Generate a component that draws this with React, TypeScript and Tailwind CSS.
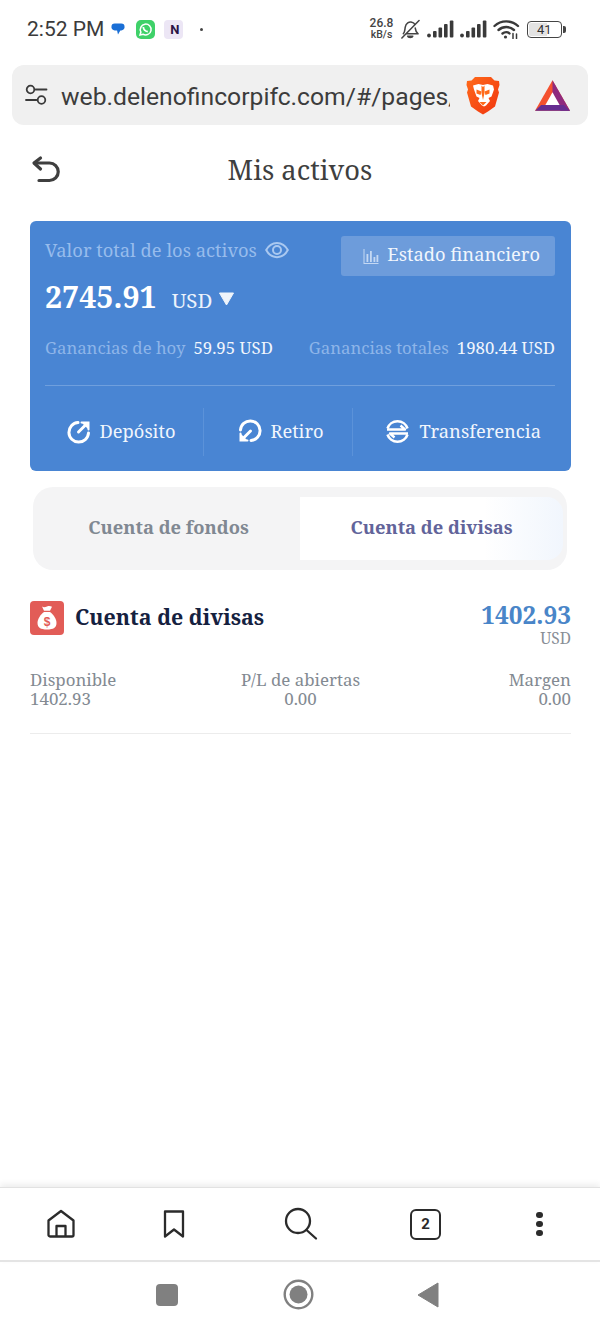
import React from "react";

const serif = "font-['Noto_Serif','DejaVu_Serif',serif]";

function Signal() {
  return (
    <svg width="27" height="18" viewBox="0 0 27 18" fill="#3a3a3a">
      <circle cx="2" cy="15.500" r="1.900" />
      <rect x="6" y="11" width="3.600" height="6.500" rx="1" />
      <rect x="11.500" y="7.500" width="3.600" height="10" rx="1" />
      <rect x="17" y="4" width="3.600" height="13.500" rx="1" />
      <rect x="22.800" y="0.500" width="3.600" height="17" rx="1" />
    </svg>
  );
}

function StatusBar() {
  return (
    <div className="h-[58px] flex items-center pl-[27px] pr-[34px] font-['Roboto',sans-serif] text-[#3b3b3b] shrink-0">
      <span className="text-[21px] leading-none">2:52 PM</span>
      <svg className="ml-[7px]" width="14" height="14" viewBox="0 0 15 14">
        <path d="M4 1h7a3.500 3.500 0 0 1 3.500 3.500v0A3.500 3.500 0 0 1 11 8.500H10L7.500 13 6.500 8.500H4A3.500 3.500 0 0 1 .5 4.500v0A3.500 3.500 0 0 1 4 1z" fill="#1a6fd6" />
      </svg>
      <span className="ml-[11px] w-[19px] h-[19px] rounded-[5px] bg-[#3fd169] flex items-center justify-center">
        <svg width="15" height="15" viewBox="0 0 15 15" fill="none" stroke="#fff" strokeWidth="1.500">
          <path d="M2 13l.9-3A5.400 5.400 0 1 1 5 12.200z" />
          <path d="M5.300 5c.2 2 2 4.200 4.500 4.700" strokeWidth="1.800" />
        </svg>
      </span>
      <span className="ml-[9px] w-[19px] h-[19px] rounded-[4px] bg-[#ece6f5] flex items-center justify-center text-[13px] font-bold text-[#2a1245] leading-none pl-[2px]">N</span>
      <span className="ml-[17px] w-[3px] h-[3px] rounded-full bg-[#444]" />
      <div className="ml-auto flex items-center">
        <div className="w-[23px] flex flex-col items-center text-[10.500px] leading-[11px] font-medium text-[#444]">
          <span className="text-[12px]">26.8</span>
          <span>kB/s</span>
        </div>
        <svg className="ml-[7px]" width="20" height="21" viewBox="0 0 21 21" fill="none" stroke="#444" strokeWidth="1.600" strokeLinecap="round" strokeLinejoin="round">
          <path d="M3.500 15c1.800-2 1.500-4.500 2-7C6.200 4 9.500 2 12.500 2.800c1.400.3 2.500 1.200 3 2.300" />
          <path d="M16 9c.2 2 .6 4 3 6H7" />
          <path d="M8 17.500h5.500c-.5 2-5 2-5.500 0z" />
          <path d="M2 19.500 20 1" />
        </svg>
        <div className="ml-[7px]"><Signal /></div>
        <div className="ml-[6px]"><Signal /></div>
        <svg className="ml-[6px]" width="27" height="20" viewBox="0 0 27 20" fill="none" stroke="#3a3a3a" strokeWidth="2.400" strokeLinecap="round">
          <path d="M1.500 7C8 .8 18.500.8 25 7" />
          <path d="M5.500 11c4.500-4 11-4 15.500 0" />
          <path d="M9.500 14.500c2.200-1.800 5.300-1.800 7 0" />
          <circle cx="12.500" cy="18" r="1.600" fill="#3a3a3a" stroke="none" />
          <path d="M20 14.500v5M23.500 15v4.500" strokeWidth="1.500" />
        </svg>
        <div className="ml-[7px] flex items-center">
          <div className="w-[35px] h-[17px] rounded-[4px] border border-[#444] p-[1px] flex">
            <div className="w-[18px] bg-[#e3e3e3] rounded-l-[2px] relative">
              <span className="absolute left-[8px] top-0 text-[13px] leading-[13px] text-[#333]">41</span>
            </div>
          </div>
          <div className="w-[3px] h-[7px] ml-[1px] bg-[#444] rounded-r-[2px]" />
        </div>
      </div>
    </div>
  );
}

function UrlBar() {
  return (
    <div className="mx-[12px] mt-[7px] h-[60px] rounded-[12px] bg-[#f0f0f0] flex items-center pl-[13px] font-['Roboto',sans-serif] shrink-0">
      <svg width="23" height="22" viewBox="0 0 23 22" fill="none" stroke="#3a3a3a" strokeWidth="1.800" strokeLinecap="round">
        <circle cx="5.500" cy="5.500" r="3.800" />
        <path d="M10.500 5.500h11M1 16h10.500" />
        <circle cx="16.500" cy="16" r="3.800" />
      </svg>
      <div className="ml-[13px] w-[389px] overflow-hidden whitespace-nowrap text-[24.700px] leading-[32px] pt-[3px] text-[#3c3c3c]">
        web.delenofincorpifc.com/#/pages/assets
      </div>
      <svg className="ml-[16px]" width="34" height="39" viewBox="0 0 34 39">
        <defs>
          <linearGradient id="brave" x1="0" y1="0" x2="1" y2="1">
            <stop offset="0" stopColor="#ff6a1a" />
            <stop offset="1" stopColor="#f0350f" />
          </linearGradient>
        </defs>
        <path d="M9 1h16l3.500 3.500L33 5l.5 4-1.500 4.500 1 3-4 14-7 5-5 3-5-3-7-5-4-14 1-3L.5 9 1 5l4.500-.5z" fill="url(#brave)" />
        <path d="M7 9.500l5.500-1.500 4.500 1 4.500-1L27 9.500l1 4-2.500 7-3 1.500 1.500 3-4 4.500-2 1-2-1-4-4.500 1.500-3-3-1.500-2.500-7z" fill="#fff" />
        <path d="M10.500 13.500l5 2-1 3.500-4-1.500zM23.500 13.500l-5 2 1 3.500 4-1.500z" fill="#ff6a1a" />
        <path d="M15.500 9.500 17 11l1.500-1.500V17l-1.500 7-1.500-7zM13.500 26h7l-3.500 3.500z" fill="#ff6a1a" />
      </svg>
      <svg className="ml-[35px]" width="35" height="31" viewBox="0 0 37 32">
        <path d="M18.500 0 37 32H0z" fill="#f4512f" />
        <path d="M18.500 0 37 32H27L18.500 16z" fill="#8e2a7e" />
        <path d="M0 32l6.500-6h24l6.500 6z" fill="#662d91" />
        <path d="M18.500 12.500 26 26H11z" fill="#fff" />
      </svg>
    </div>
  );
}

function BackIcon() {
  return (
    <svg width="30" height="30" viewBox="0 0 30 30" fill="none" stroke="#3f3f3f" strokeWidth="3.200" strokeLinecap="round" strokeLinejoin="round">
      <path d="M9.500 4 3 9l6.500 6" />
      <path d="M3.500 9h15a8.750 8.750 0 0 1 0 17.500H8" />
    </svg>
  );
}

function Card() {
  return (
    <div className={`ml-[30px] w-[541px] mt-[18px] h-[250px] rounded-[6px] bg-[#4985d3] pl-[15px] pr-[16px] ${serif}`}>
      <div className="flex justify-between items-start pt-[15px]">
        <div className="flex items-center pt-[1px]">
          <span className="text-[18.350px] leading-[26px] text-[#97bcec]">Valor total de los activos</span>
          <svg className="ml-[8px]" width="24" height="18" viewBox="0 0 24 18" fill="none" stroke="#a9c8f0" strokeWidth="2">
            <path d="M1.200 9c5-9.500 16.600-9.500 21.600 0-5 9.500-16.600 9.500-21.600 0z" />
            <circle cx="12" cy="9" r="4" />
          </svg>
        </div>
        <div className="w-[214px] h-[40px] rounded-[3px] bg-[#6d9cdb] flex items-center justify-end pr-[15px] text-[18.300px] text-[#f1f6fd]">
          <svg className="mr-[8px]" width="16" height="15" viewBox="0 0 15 15" fill="#c4d8f3">
            <path d="M0 0h1v14h14v1H0z" />
            <rect x="3" y="5" width="1.800" height="8" />
            <rect x="6.500" y="2" width="1.800" height="11" />
            <rect x="10" y="8" width="1.800" height="5" />
            <rect x="13" y="6" width="1.800" height="7" />
          </svg>
          <span className="mb-[4px]">Estado financiero</span>
        </div>
      </div>
      <div className="flex items-center mt-[-1px] text-white">
        <span className="text-[30.300px] leading-[44px] font-bold">2745.91</span>
        <span className="ml-[15px] mt-[6px] text-[20.500px] text-[#edf3fc]">USD</span>
        <svg className="ml-[6px] mt-[3px]" width="17" height="14" viewBox="0 0 17 14"><path d="M1.500 1h14L8.500 13z" fill="#eef4fb" stroke="#eef4fb" strokeLinejoin="round" /></svg>
      </div>
      <div className="flex justify-between items-center mt-[17px] text-[16.750px] leading-[24px] whitespace-nowrap">
        <div><span className="text-[#8eb5e9]">Ganancias de hoy</span><span className="ml-[8px] text-[#f1f6fd] text-[16.800px]">59.95 USD</span></div>
        <div><span className="text-[#8eb5e9]">Ganancias totales</span><span className="ml-[8px] text-[#f1f6fd] text-[16.800px]">1980.44 USD</span></div>
      </div>
      <div className="mt-[25px] h-[1px] bg-[#6f9fdd]" />
      <div className="flex items-center h-[85px] pt-[6px] text-[18.300px] text-[#f1f6fd] whitespace-nowrap">
        <div className="w-[159px] h-[48px] pr-[6px] flex items-center justify-center border-r border-[#5b92d9]">
          <svg className="mr-[8px]" width="25" height="25" viewBox="0 0 25 25" fill="none" stroke="#fff" strokeWidth="3" strokeLinecap="round">
            <path d="M11 3.500a9.800 9.800 0 1 0 10.500 10.500" />
            <path d="M11.500 13 20 4.500" />
            <path d="M14.500 3.500h7v7" fill="#fff" strokeWidth="2" />
          </svg>
          <span className="mb-[2px]">Depósito</span>
        </div>
        <div className="w-[149px] h-[48px] pl-[5px] flex items-center justify-center border-r border-[#5b92d9]">
          <svg className="mr-[8px] rotate-180" width="25" height="25" viewBox="0 0 25 25" fill="none" stroke="#fff" strokeWidth="3" strokeLinecap="round">
            <path d="M11 3.500a9.800 9.800 0 1 0 10.500 10.500" />
            <path d="M11.500 13 20 4.500" />
            <path d="M14.500 3.500h7v7" fill="#fff" strokeWidth="2" />
          </svg>
          <span className="mb-[2px]">Retiro</span>
        </div>
        <div className="flex-1 h-[48px] flex items-center justify-end pr-[14px]">
          <svg className="mr-[9px]" width="25" height="25" viewBox="0 0 25 25" fill="none" stroke="#fff" strokeWidth="2.600">
            <path d="M2.500 9.500A10.500 10.500 0 0 1 22.500 9.500" />
            <path d="M2.500 15.500A10.500 10.500 0 0 0 22.500 15.500" />
            <path d="M2 10.500h18L15.500 6.500" strokeLinejoin="round" strokeWidth="2.400" />
            <path d="M23 14.500H5l4.500 4" strokeLinejoin="round" strokeWidth="2.400" />
          </svg>
          <span className="mb-[2px]">Transferencia</span>
        </div>
      </div>
    </div>
  );
}

function Tabs() {
  return (
    <div className={`mx-[33px] mt-[16px] h-[83px] rounded-[20px] bg-[#f4f4f5] py-[10px] pr-[4px] flex text-[18.350px] font-bold shrink-0 ${serif}`}>
      <div className="w-[267px] flex items-center justify-center pl-[4px] pb-[4px] text-[#808892]">Cuenta de fondos</div>
      <div className="flex-1 rounded-r-[16px] bg-gradient-to-r from-white from-[70%] to-[#f1f6fd] flex items-center justify-center pb-[4px] text-[#62649a]">Cuenta de divisas</div>
    </div>
  );
}

function Account() {
  return (
    <div className={`ml-[30px] w-[541px] mt-[31px] border-b border-[#ececec] pb-[25px] ${serif}`}>
      <div className="flex justify-between h-[46px]">
        <div className="flex items-center h-[34px]">
          <span className="w-[34px] h-[34px] rounded-[4px] bg-[#e25c57] flex items-center justify-center">
            <svg width="20" height="24" viewBox="0 0 20 24" fill="#fff">
              <path d="M5 0.500c1.500 1 3 .8 5 0 2-.8 3.500-.5 5 .3l-2 4H7z" />
              <path d="M7 6h6c3.500 2.500 6.500 7 6.500 11 0 4.500-3 6.500-9.500 6.500S.5 21.500.5 17C.5 13 3.500 8.500 7 6z" />
              <text x="10" y="20" textAnchor="middle" fontSize="12" fontWeight="700" fill="#e25c57" fontFamily="Liberation Sans">$</text>
            </svg>
          </span>
          <span className="ml-[11px] mb-[2px] text-[21.400px] font-bold text-[#15213f]">Cuenta de divisas</span>
        </div>
        <div className="flex flex-col items-end">
          <span className="text-[24.400px] leading-[28px] font-bold text-[#4985c8]">1402.93</span>
          <span className="text-[15.500px] leading-[19px] text-[#888e96]">USD</span>
        </div>
      </div>
      <div className="grid grid-cols-3 mt-[23px] text-[16.900px] leading-[19px] text-[#838a92]">
        <div><div>Disponible</div><div>1402.93</div></div>
        <div className="text-center"><div>P/L de abiertas</div><div>0.00</div></div>
        <div className="text-right"><div>Margen</div><div>0.00</div></div>
      </div>
    </div>
  );
}

function BottomNav() {
  return (
    <div className="h-[75px] border-t border-b-2 border-t-[#e2e2e2] border-b-[#e4e4e4] shadow-[0_-3px_6px_rgba(0,0,0,0.07)] flex items-center shrink-0">
      <svg className="ml-[46px]" width="30" height="30" viewBox="0 0 30 30" fill="none" stroke="#2b2b2b" strokeWidth="2.300" strokeLinejoin="round">
        <path d="M2.500 11.500 15 2l12.500 9.500V26a1.500 1.500 0 0 1-1.500 1.500H4A1.500 1.500 0 0 1 2.500 26z" />
        <path d="M10.500 27V17h9v10" />
      </svg>
      <svg className="ml-[85px]" width="26" height="30" viewBox="0 0 26 30" fill="none" stroke="#2b2b2b" strokeWidth="2.300" strokeLinejoin="round">
        <path d="M4 2.500h18v25l-9-7-9 7z" />
      </svg>
      <svg className="ml-[96px]" width="36" height="36" viewBox="0 0 36 36" fill="none" stroke="#2b2b2b" strokeWidth="2.300" strokeLinecap="round">
        <circle cx="15" cy="15" r="12" />
        <path d="M23.500 24 33 32.500" />
      </svg>
      <div className="ml-[91px] w-[31px] h-[31px] rounded-[6px] border-2 border-[#2b2b2b] flex items-center justify-center text-[15px] font-bold text-[#2b2b2b] font-['Roboto',sans-serif] leading-none">2</div>
      <div className="ml-[95px] flex flex-col gap-[2.500px]">
        <span className="w-[6.500px] h-[6.500px] rounded-full bg-[#2b2b2b]" />
        <span className="w-[6.500px] h-[6.500px] rounded-full bg-[#2b2b2b]" />
        <span className="w-[6.500px] h-[6.500px] rounded-full bg-[#2b2b2b]" />
      </div>
    </div>
  );
}

function SystemBar() {
  return (
    <div className="h-[71px] flex items-center shrink-0 pb-[6px]">
      <span className="ml-[156px] w-[22px] h-[22px] rounded-[4px] bg-[#808080]" />
      <svg className="ml-[105px]" width="31" height="31" viewBox="0 0 31 31">
        <circle cx="15.500" cy="15.500" r="13.800" fill="none" stroke="#808080" strokeWidth="2.400" />
        <circle cx="15.500" cy="15.500" r="9" fill="#808080" />
      </svg>
      <svg className="ml-[103px]" width="22" height="26" viewBox="0 0 22 26"><path d="M21 1v24L1 13z" fill="#808080" stroke="#808080" strokeLinejoin="round" /></svg>
    </div>
  );
}

export default function App() {
  return (
    <div className="w-[600px] h-[1333px] bg-white flex flex-col overflow-hidden">
      <StatusBar />
      <UrlBar />
      <div className="relative flex items-center justify-center h-[66px] mt-[12px] shrink-0">
        <div className="absolute left-[31px] top-[17px]"><BackIcon /></div>
        <span className={`text-[27.300px] text-[#3f3f3f] ${serif}`}>Mis activos</span>
      </div>
      <Card />
      <Tabs />
      <Account />
      <div className="flex-1" />
      <BottomNav />
      <SystemBar />
    </div>
  );
}
